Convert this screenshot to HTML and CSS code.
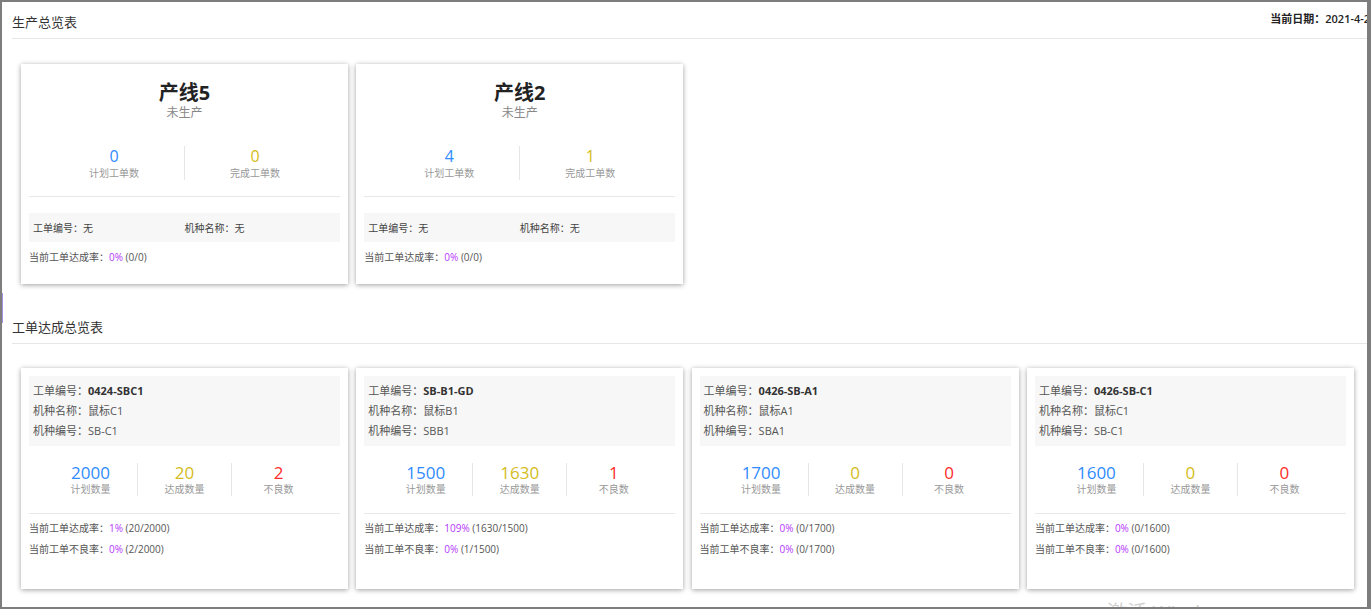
FILE: index.html
```html
<!DOCTYPE html>
<html lang="zh-CN">
<head>
<meta charset="utf-8">
<title>生产总览表</title>
<link rel="stylesheet" href="styles.css">
</head>
<body>
<div class="frame">
  <section class="section">
    <div class="sec-head">
      <span class="sec-title">生产总览表</span>
      <span class="date">当前日期：2021-4-26 10:28:35</span>
    </div>
    <div class="cards cards-top">
      <div class="card line-card">
        <div class="line-name">产线5</div>
        <div class="line-status">未生产</div>
        <div class="stats">
          <div class="stat"><div class="num blue">0</div><div class="lbl">计划工单数</div></div>
          <div class="stat"><div class="num yellow">0</div><div class="lbl">完成工单数</div></div>
        </div>
        <div class="rule"></div>
        <div class="info-row">
          <span>工单编号：无</span>
          <span>机种名称：无</span>
        </div>
        <div class="rate">当前工单达成率：<span class="purple">0%</span> (0/0)</div>
      </div>
      <div class="card line-card">
        <div class="line-name">产线2</div>
        <div class="line-status">未生产</div>
        <div class="stats">
          <div class="stat"><div class="num blue">4</div><div class="lbl">计划工单数</div></div>
          <div class="stat"><div class="num yellow">1</div><div class="lbl">完成工单数</div></div>
        </div>
        <div class="rule"></div>
        <div class="info-row">
          <span>工单编号：无</span>
          <span>机种名称：无</span>
        </div>
        <div class="rate">当前工单达成率：<span class="purple">0%</span> (0/0)</div>
      </div>
    </div>
  </section>

  <section class="section">
    <div class="sec-head">
      <span class="sec-title">工单达成总览表</span>
    </div>
    <div class="cards cards-bottom">
      <div class="card order-card">
        <div class="info-box">
          <div>工单编号：<b>0424-SBC1</b></div>
          <div>机种名称：鼠标C1</div>
          <div>机种编号：SB-C1</div>
        </div>
        <div class="stats stats3">
          <div class="stat"><div class="num blue">2000</div><div class="lbl">计划数量</div></div>
          <div class="stat"><div class="num yellow">20</div><div class="lbl">达成数量</div></div>
          <div class="stat"><div class="num red">2</div><div class="lbl">不良数</div></div>
        </div>
        <div class="rule rule2"></div>
        <div class="rates">
          <div>当前工单达成率：<span class="purple">1%</span> (20/2000)</div>
          <div>当前工单不良率：<span class="purple">0%</span> (2/2000)</div>
        </div>
      </div>
      <div class="card order-card">
        <div class="info-box">
          <div>工单编号：<b>SB-B1-GD</b></div>
          <div>机种名称：鼠标B1</div>
          <div>机种编号：SBB1</div>
        </div>
        <div class="stats stats3">
          <div class="stat"><div class="num blue">1500</div><div class="lbl">计划数量</div></div>
          <div class="stat"><div class="num yellow">1630</div><div class="lbl">达成数量</div></div>
          <div class="stat"><div class="num red">1</div><div class="lbl">不良数</div></div>
        </div>
        <div class="rule rule2"></div>
        <div class="rates">
          <div>当前工单达成率：<span class="purple">109%</span> (1630/1500)</div>
          <div>当前工单不良率：<span class="purple">0%</span> (1/1500)</div>
        </div>
      </div>
      <div class="card order-card">
        <div class="info-box">
          <div>工单编号：<b>0426-SB-A1</b></div>
          <div>机种名称：鼠标A1</div>
          <div>机种编号：SBA1</div>
        </div>
        <div class="stats stats3">
          <div class="stat"><div class="num blue">1700</div><div class="lbl">计划数量</div></div>
          <div class="stat"><div class="num yellow">0</div><div class="lbl">达成数量</div></div>
          <div class="stat"><div class="num red">0</div><div class="lbl">不良数</div></div>
        </div>
        <div class="rule rule2"></div>
        <div class="rates">
          <div>当前工单达成率：<span class="purple">0%</span> (0/1700)</div>
          <div>当前工单不良率：<span class="purple">0%</span> (0/1700)</div>
        </div>
      </div>
      <div class="card order-card">
        <div class="info-box">
          <div>工单编号：<b>0426-SB-C1</b></div>
          <div>机种名称：鼠标C1</div>
          <div>机种编号：SB-C1</div>
        </div>
        <div class="stats stats3">
          <div class="stat"><div class="num blue">1600</div><div class="lbl">计划数量</div></div>
          <div class="stat"><div class="num yellow">0</div><div class="lbl">达成数量</div></div>
          <div class="stat"><div class="num red">0</div><div class="lbl">不良数</div></div>
        </div>
        <div class="rule rule2"></div>
        <div class="rates">
          <div>当前工单达成率：<span class="purple">0%</span> (0/1600)</div>
          <div>当前工单不良率：<span class="purple">0%</span> (0/1600)</div>
        </div>
      </div>
    </div>
  </section>
  <div class="mark"></div>
  <div class="watermark">激活 Windows</div>
</div>
</body>
</html>
```

FILE: styles.css
```css
html, body {
  margin: 0;
  padding: 0;
  background: #ffffff;
}

body {
  font-family: "Open Sans", "Noto Sans CJK SC", sans-serif;
  color: #333;
}

.frame {
  position: relative;
  width: 1371px;
  height: 609px;
  box-sizing: border-box;
  border-style: solid;
  border-color: #7d7d7d;
  border-width: 2px 4px 2px 2px;
  overflow: hidden;
  background: #fff;
}

.section {
  padding-left: 10px;
}

.sec-head {
  display: flex;
  align-items: flex-start;
  height: 37px;
  box-sizing: border-box;
  border-bottom: 1px solid #e6e6e6;
}

.sec-title {
  margin-top: 11px;
  font-size: 13px;
  line-height: 18px;
  color: #333;
}

.date {
  margin-left: auto;
  margin-right: -56px;
  margin-top: 9px;
  font-size: 11px;
  line-height: 16px;
  color: #222;
  font-weight: 600;
  white-space: nowrap;
}

.cards {
  display: flex;
  gap: 8.3px;
  padding-left: 9px;
}

.cards-top {
  padding-top: 25px;
  padding-bottom: 23px;
}

.cards-bottom {
  padding-top: 24px;
}

.card {
  width: 327px;
  box-sizing: border-box;
  background: #fff;
  box-shadow: 0 1px 5px rgba(0, 0, 0, 0.38);
  padding-left: 8px;
  padding-right: 8px;
}

.line-card {
  height: 220px;
  padding-top: 17px;
}

.order-card {
  height: 221px;
  padding-top: 8px;
}

.line-name {
  text-align: center;
  font-size: 20px;
  line-height: 24px;
  font-weight: 700;
  color: #222;
}

.line-status {
  text-align: center;
  font-size: 12px;
  line-height: 16px;
  color: #888;
}

.stats {
  display: flex;
  margin-top: 25px;
  padding: 0 15px;
}

.stats3 {
  margin-top: 17px;
}

.stat {
  flex: 1;
  text-align: center;
}

.stat + .stat {
  border-left: 1px solid #e6e6e6;
}

.num {
  font-size: 16px;
  line-height: 20px;
}

.stats3 .num {
  font-size: 17px;
}

.lbl {
  font-size: 10px;
  line-height: 14px;
  color: #999;
}

.stats3 .lbl {
  line-height: 13px;
}

.blue { color: #2f8bff; }
.yellow { color: #d4bc22; }
.red { color: #ff2b2b; }
.purple { color: #b536ff; }

.rule {
  margin-top: 16px;
  border-top: 1px solid #e8e8e8;
}

.rule2 {
  margin-top: 17px;
}

.info-row {
  margin-top: 16px;
  height: 29px;
  background: #f7f7f7;
  padding: 0 4px;
  display: grid;
  grid-template-columns: 1fr 1fr;
  align-items: center;
  font-size: 10px;
  color: #444;
}

.rate {
  margin-top: 8px;
  font-size: 10px;
  line-height: 14px;
  color: #555;
}

.info-box {
  background: #f7f7f7;
  padding: 5px 4px;
  font-size: 11px;
  line-height: 20px;
  color: #555;
}

.info-box b {
  color: #333;
  font-weight: 700;
}

.rates {
  margin-top: 4px;
  font-size: 10px;
  line-height: 21px;
  color: #555;
}

.mark {
  position: absolute;
  left: 0;
  top: 291px;
  width: 1px;
  height: 30px;
  background: #a48fe0;
}

.watermark {
  position: absolute;
  left: 1105px;
  top: 599px;
  font-size: 20px;
  line-height: 24px;
  color: #d2d2d2;
  white-space: nowrap;
}
```
